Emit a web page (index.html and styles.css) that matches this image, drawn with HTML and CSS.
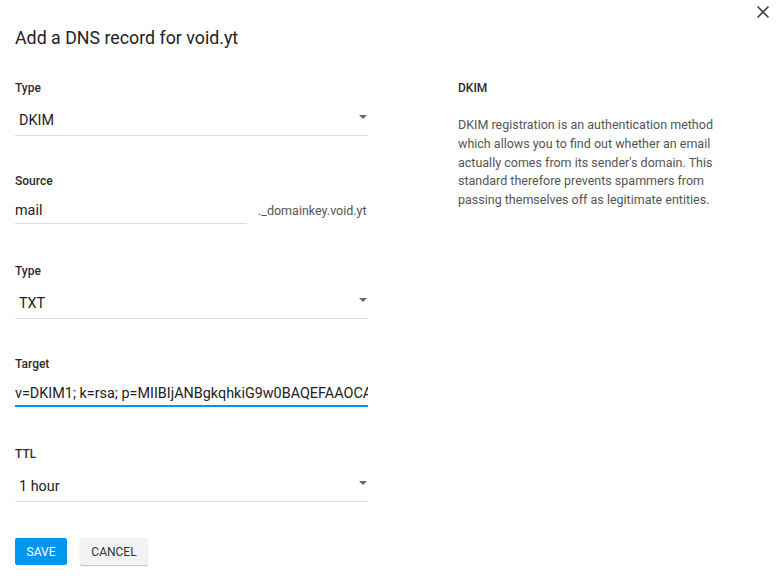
FILE: index.html
```html
<!DOCTYPE html>
<html>
<head>
<meta charset="utf-8">
<link rel="stylesheet" href="styles.css">
</head>
<body>
<div class="dialog">
  <button class="close" aria-label="Close">
    <svg width="14" height="14" viewBox="0 0 14 14"><path d="M1.5 1.5 L12.5 12.5 M12.5 1.5 L1.5 12.5" stroke="#444" stroke-width="1.6" fill="none"/></svg>
  </button>
  <h1 class="title">Add a DNS record for void.yt</h1>
  <div class="body">
    <div class="form">
      <div class="field">
        <label class="label">Type</label>
        <div class="select"><span>DKIM</span><i class="caret"></i></div>
      </div>
      <div class="field field-text">
        <label class="label">Source</label>
        <div class="source-row">
          <div class="input short">mail</div>
          <span class="suffix">._domainkey.void.yt</span>
        </div>
      </div>
      <div class="field">
        <label class="label">Type</label>
        <div class="select"><span>TXT</span><i class="caret"></i></div>
      </div>
      <div class="field field-text">
        <label class="label">Target</label>
        <div class="input focused">v=DKIM1; k=rsa; p=MIIBIjANBgkqhkiG9w0BAQEFAAOCAQ8AMIIBCgKCAQEA</div>
      </div>
      <div class="field">
        <label class="label">TTL</label>
        <div class="select"><span>1 hour</span><i class="caret"></i></div>
      </div>
      <div class="actions">
        <button class="btn primary">SAVE</button>
        <button class="btn secondary">CANCEL</button>
      </div>
    </div>
    <aside class="help">
      <div class="help-title">DKIM</div>
      <p class="help-text">DKIM registration is an authentication method which allows you to find out whether an email actually comes from its sender's domain. This standard therefore prevents spammers from passing themselves off as legitimate entities.</p>
    </aside>
  </div>
</div>
</body>
</html>
```
FILE: styles.css
```css
* { box-sizing: border-box; }
html, body { margin: 0; padding: 0; background: #fff; }
body { font-family: Roboto, "Noto Sans", Arial, sans-serif; color: #212121; }

.dialog { position: relative; padding: 26px 15px 0 15px; width: 778px; height: 584px; }

.close {
  position: absolute; top: 5px; right: 8px;
  width: 14px; height: 14px; padding: 0; border: 0; background: none;
  display: flex; align-items: center; justify-content: center;
}

.title { margin: 0; font-size: 17.8px; line-height: 24px; font-weight: 400; color: #222; }

.body { display: flex; margin-top: 30px; }

.form { width: 353px; display: flex; flex-direction: column; gap: 37px; }

.field { display: flex; flex-direction: column; gap: 8px; }
.field-text { gap: 7px; padding-bottom: 2px; }

.label { font-size: 12px; line-height: 16px; font-weight: 500; color: #2c2c2c; }

.select {
  height: 32px; border-bottom: 1px solid #dcdcdc;
  display: flex; align-items: center; justify-content: space-between;
  padding: 1px 1px 0 4px; font-size: 14.4px; color: #222;
}
.caret {
  width: 0; height: 0; margin-bottom: 6px;
  border-left: 4px solid transparent; border-right: 4px solid transparent;
  border-top: 4px solid #666;
}

.source-row { display: flex; align-items: center; gap: 11px; }
.input {
  height: 28px; border-bottom: 1px solid #dcdcdc;
  display: flex; align-items: center; font-size: 14.4px; color: #222;
  white-space: nowrap; overflow: hidden; padding-top: 1px;
}
.input.short { width: 232px; }
.input.focused { border-bottom: 2px solid #0096ee; padding-top: 2px; }
.suffix { font-size: 12.5px; color: #555; padding-top: 1px; }

.actions { display: flex; gap: 13px; margin-top: -1px; }
.btn {
  height: 27px; border: 0; border-radius: 2px;
  font-family: inherit; font-size: 12px; letter-spacing: 0; padding: 0;
}
.primary { background: #0096f0; color: #fff; width: 52px; }
.secondary { background: #f2f2f2; color: #333; width: 68px; box-shadow: 0 1px 1px rgba(0,0,0,0.25); }

.help { margin-left: 90px; width: 265px; }
.help-title { font-size: 12px; line-height: 16px; font-weight: 500; color: #2c2c2c; }
.help-text { margin: 20px 0 0; font-size: 12.5px; line-height: 18.8px; color: #555; }
```
